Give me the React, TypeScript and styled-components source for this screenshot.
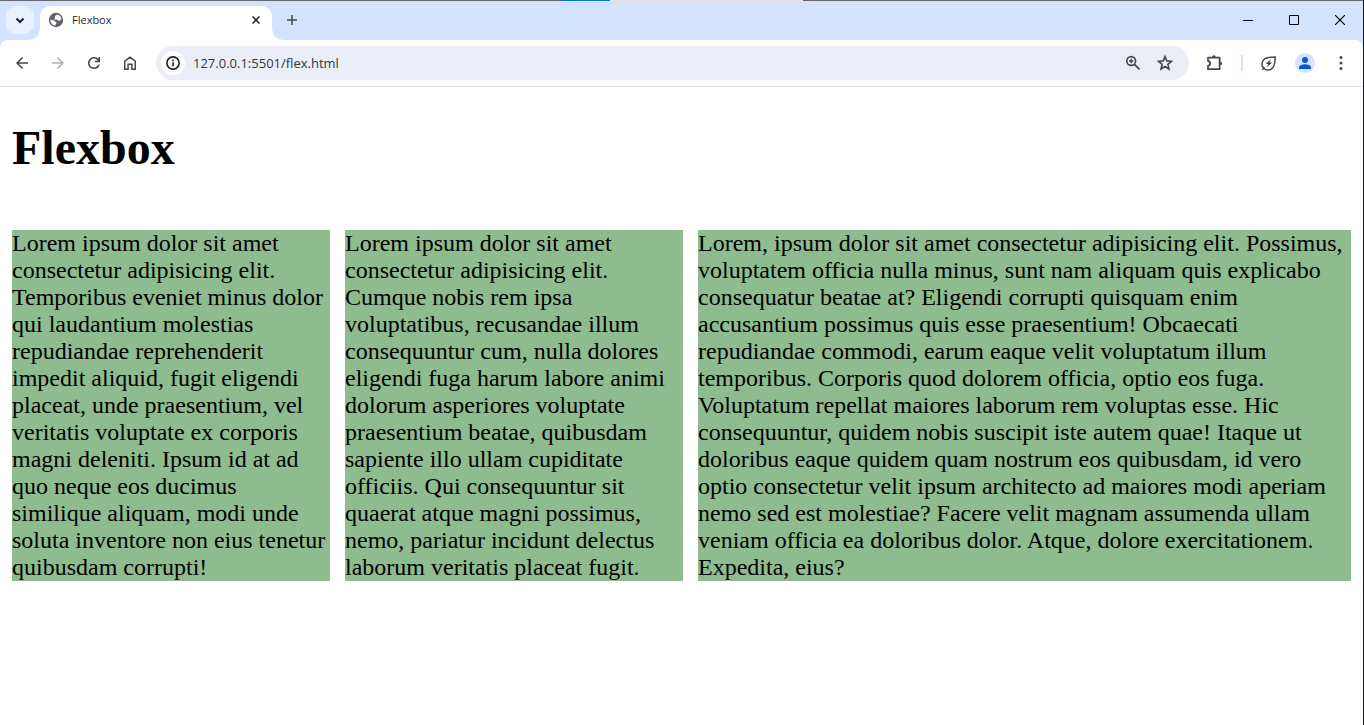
import React from "react";
import styled, { createGlobalStyle } from "styled-components";

const GlobalStyle = createGlobalStyle`
  *, *::before, *::after { box-sizing: border-box; }
  html, body { margin: 0; background: #fff; }
  button { font: inherit; border: 0; padding: 0; background: none; cursor: pointer; }
`;

const Frame = styled.div`
  min-height: 100vh;
  display: flex;
  flex-direction: column;
  border-right: 1px solid #1b1b1f;
`;

const DesktopEdge = styled.div`
  height: 1px;
  background: linear-gradient(
    to right,
    #63656f 0 561px,
    #0078d7 561px 610px,
    #e3e3e3 610px 803px,
    #63656f 803px
  );
`;

const TabStrip = styled.header`
  display: flex;
  align-items: flex-start;
  height: 39px;
  padding: 5px 0 0 6px;
  background: #d3e3fd;
`;

const TabSearch = styled.button`
  display: grid;
  place-items: center;
  width: 28px;
  height: 28px;
  border-radius: 10px;
  background: #e9f1fe;
`;

const Tab = styled.div`
  position: relative;
  display: flex;
  align-items: center;
  width: 232px;
  height: 34px;
  margin-left: 6px;
  padding: 0 8px;
  padding-bottom: 6px;
  border-radius: 10px 10px 0 0;
  background: #fff;

  &::before,
  &::after {
    content: "";
    position: absolute;
    bottom: 0;
    width: 10px;
    height: 10px;
  }
  &::before {
    right: 100%;
    background: radial-gradient(circle at 0 0, #d3e3fd 9px, #fff 10px);
  }
  &::after {
    left: 100%;
    background: radial-gradient(circle at 100% 0, #d3e3fd 9px, #fff 10px);
  }
`;

const TabTitle = styled.span`
  flex: 1;
  margin-left: 8px;
  font: 11px/16px "Open Sans", "Noto Sans", sans-serif;
  color: #1f1f1f;
`;

const SmallButton = styled.button`
  display: grid;
  place-items: center;
  width: 16px;
  height: 16px;
`;

const NewTab = styled.button`
  display: grid;
  place-items: center;
  width: 28px;
  height: 28px;
  margin-left: 6px;
`;

const WindowControls = styled.div`
  display: flex;
  margin-left: auto;
`;

const WindowButton = styled.button`
  display: grid;
  place-items: center;
  width: 46px;
  height: 28px;
`;

const ToolbarBack = styled.div`
  background: #d3e3fd;
`;

const Toolbar = styled.nav`
  display: flex;
  align-items: center;
  height: 47px;
  padding: 0 4px;
  border-bottom: 1px solid #dfe1e3;
  border-radius: 8px 8px 0 0;
  background: #fff;
`;

const ToolButton = styled.button`
  display: grid;
  place-items: center;
  width: 36px;
  height: 34px;
  color: #474747;

  &:disabled { color: #b0b0b0; }
`;

const AddressBar = styled.div`
  display: flex;
  flex: 1;
  align-items: center;
  height: 34px;
  margin: 0 8px;
  padding: 0 8px 0 5px;
  border-radius: 17px;
  background: #ebeef7;
`;

const SiteInfo = styled.button`
  display: grid;
  place-items: center;
  width: 24px;
  height: 24px;
  border-radius: 50%;
  background: #fff;
`;

const Address = styled.input`
  flex: 1;
  min-width: 0;
  height: 24px;
  margin-left: 8px;
  padding: 0;
  border: 0;
  outline: 0;
  background: transparent;
  font: 13px/24px "Open Sans", "Noto Sans", sans-serif;
  color: #35373a;
`;

const FieldButton = styled(ToolButton)`
  width: 32px;
`;

const Divider = styled.span`
  width: 2px;
  height: 16px;
  margin: 0 8px;
  background: #d3e3fd;
`;

const Avatar = styled.span`
  display: grid;
  place-items: center;
  width: 20px;
  height: 20px;
  border-radius: 50%;
  background: #d3e3fd;
`;

const Page = styled.main`
  flex: 1;
  padding: 34px 12px;
  font-family: "Liberation Serif", "Times New Roman", serif;
  color: #000;
`;

const Heading = styled.h1`
  margin: 0 0 55px;
  font-size: 48px;
  line-height: 54px;
`;

const Columns = styled.section`
  display: grid;
  grid-template-columns: 318fr 338fr 653fr;
  gap: 15px;
`;

const Column = styled.div`
  background: darkseagreen;
  font-size: 24px;
  line-height: 27px;
`;

type IconProps = { size: number; box?: number; children: React.ReactNode };

const Svg = ({ size, box = size, children }: IconProps) => (
  <svg width={size} height={size} viewBox={`0 0 ${box} ${box}`} fill="none" aria-hidden="true">
    {children}
  </svg>
);

const texts = [
  "Lorem ipsum dolor sit amet consectetur adipisicing elit. Temporibus eveniet minus dolor qui laudantium molestias repudiandae reprehenderit impedit aliquid, fugit eligendi placeat, unde praesentium, vel veritatis voluptate ex corporis magni deleniti. Ipsum id at ad quo neque eos ducimus similique aliquam, modi unde soluta inventore non eius tenetur quibusdam corrupti!",
  "Lorem ipsum dolor sit amet consectetur adipisicing elit. Cumque nobis rem ipsa voluptatibus, recusandae illum consequuntur cum, nulla dolores eligendi fuga harum labore animi dolorum asperiores voluptate praesentium beatae, quibusdam sapiente illo ullam cupiditate officiis. Qui consequuntur sit quaerat atque magni possimus, nemo, pariatur incidunt delectus laborum veritatis placeat fugit.",
  "Lorem, ipsum dolor sit amet consectetur adipisicing elit. Possimus, voluptatem officia nulla minus, sunt nam aliquam quis explicabo consequatur beatae at? Eligendi corrupti quisquam enim accusantium possimus quis esse praesentium! Obcaecati repudiandae commodi, earum eaque velit voluptatum illum temporibus. Corporis quod dolorem officia, optio eos fuga. Voluptatum repellat maiores laborum rem voluptas esse. Hic consequuntur, quidem nobis suscipit iste autem quae! Itaque ut doloribus eaque quidem quam nostrum eos quibusdam, id vero optio consectetur velit ipsum architecto ad maiores modi aperiam nemo sed est molestiae? Facere velit magnam assumenda ullam veniam officia ea doloribus dolor. Atque, dolore exercitationem. Expedita, eius?",
];

export default function App() {
  return (
    <Frame>
      <GlobalStyle />
      <DesktopEdge />
      <TabStrip>
        <TabSearch aria-label="Search tabs">
          <Svg size={10}>
            <path d="M1.5 3.5 5 7l3.5-3.5" stroke="#1f1f1f" strokeWidth="2" />
          </Svg>
        </TabSearch>
        <Tab>
          <Svg size={16}>
            <circle cx="8" cy="8" r="7.2" fill="#5f6368" />
            <path
              d="M2.3 7.6 5 8.2c1.2.2 1.8.6 2.2 1.3.4.8 1.3.4 1.3 1.3 0 1-.9 1-.9 2v.8C4.6 13.6 2.3 11 2.3 7.6ZM8.8 2.5c-.2.8-1.3.8-1.8 1.4-.5.8.2 1.3 0 2-.1.7-.9.9-.6 1.5.3.5 1.4.1 2.300.2.9.1.9 1 1.700 1.200 1.200.2 2-.9 3.200-1.300C13.500 4.900 11.500 2.900 8.800 2.500Z"
              fill="#fff"
            />
          </Svg>
          <TabTitle>Flexbox</TabTitle>
          <SmallButton aria-label="Close tab">
            <Svg size={10}>
              <path d="m1.5 1.5 7 7m0-7-7 7" stroke="#1f1f1f" strokeWidth="1.5" />
            </Svg>
          </SmallButton>
        </Tab>
        <NewTab aria-label="New tab">
          <Svg size={12}>
            <path d="M6 1v10M1 6h10" stroke="#474747" strokeWidth="1.5" />
          </Svg>
        </NewTab>
        <WindowControls>
          <WindowButton aria-label="Minimize">
            <Svg size={10}>
              <path d="M0 5.5h10" stroke="#000" />
            </Svg>
          </WindowButton>
          <WindowButton aria-label="Maximize">
            <Svg size={10}>
              <path d="M.5.5h9v9h-9z" stroke="#000" />
            </Svg>
          </WindowButton>
          <WindowButton aria-label="Close">
            <Svg size={10}>
              <path d="m0 0 10 10M10 0 0 10" stroke="#000" strokeWidth="1.1" />
            </Svg>
          </WindowButton>
        </WindowControls>
      </TabStrip>
      <ToolbarBack>
        <Toolbar aria-label="Browser toolbar">
          <ToolButton aria-label="Back">
            <Svg size={18} box={24}>
              <path d="M20 11H7.83l5.590-5.590L12 4l-8 8 8 8 1.410-1.410L7.830 13H20v-2z" fill="currentColor" />
            </Svg>
          </ToolButton>
          <ToolButton aria-label="Forward" disabled>
            <Svg size={18} box={24}>
              <path d="m12 4-1.410 1.410L16.170 11H4v2h12.170l-5.580 5.590L12 20l8-8z" fill="currentColor" />
            </Svg>
          </ToolButton>
          <ToolButton aria-label="Reload">
            <Svg size={18} box={24}>
              <path
                d="M12 20a8 8 0 1 1 6-13.250V4h2v7h-7V9h4.200A6 6 0 1 0 17.650 14h2.100A8 8 0 0 1 12 20z"
                fill="currentColor"
              />
            </Svg>
          </ToolButton>
          <ToolButton aria-label="Home">
            <Svg size={18}>
              <path
                d="M3.750 15.250V7.200L9 3.200l5.250 4v8.050h-3.300V10.200h-3.900v5.050z"
                stroke="currentColor"
                strokeWidth="1.500"
              />
            </Svg>
          </ToolButton>
          <AddressBar>
            <SiteInfo aria-label="View site information">
              <Svg size={16}>
                <circle cx="8" cy="8" r="6.1" stroke="#1f1f1f" strokeWidth="1.6" />
                <path d="M8 7.200v4M8 4.600v1.600" stroke="#1f1f1f" strokeWidth="1.6" />
              </Svg>
            </SiteInfo>
            <Address aria-label="Address" defaultValue="127.0.0.1:5501/flex.html" />
            <FieldButton aria-label="Zoom">
              <Svg size={16}>
                <circle cx="6.2" cy="6" r="4.4" stroke="currentColor" strokeWidth="1.6" />
                <path d="m9.500 9.300 5 5" stroke="currentColor" strokeWidth="1.8" />
                <path d="M6.200 3.800v4.400M4 6h4.400" stroke="currentColor" strokeWidth="1.4" />
              </Svg>
            </FieldButton>
            <FieldButton aria-label="Bookmark this page">
              <Svg size={18}>
                <path
                  d="m9 2.600 1.800 4.300 4.700.4-3.600 3.100 1.100 4.600-4-2.500L5 15l1.100-4.600-3.600-3.100 4.700-.4z"
                  stroke="currentColor"
                  strokeWidth="1.600"
                />
              </Svg>
            </FieldButton>
          </AddressBar>
          <ToolButton aria-label="Extensions">
            <Svg size={18}>
              <path
                d="M2 3.600h11.600v11.600H2v-3.500c1.500-.2 2.200-1 2.200-2.300S3.500 7.300 2 7.100z"
                stroke="currentColor"
                strokeWidth="1.700"
                strokeLinejoin="round"
              />
              <path d="M6 3.200a1.900 1.900 0 0 1 3.800 0zM14.200 7.500a1.900 1.900 0 0 1 0 3.800z" fill="currentColor" />
            </Svg>
          </ToolButton>
          <Divider />
          <ToolButton aria-label="Energy saver">
            <Svg size={18}>
              <path
                d="M3.700 14.300a6 6 0 0 1 0-8.500C6 3.500 10 3 15.200 2.900 15.200 8 14.500 12 12.200 14.300a6 6 0 0 1-8.500 0zM4.600 13.400l-2.300 2.400"
                stroke="currentColor"
                strokeWidth="1.500"
              />
              <path d="m10.900 5.300-5 4.300 2.300.6-1.400 3 5.200-4.400-2.500-.6z" fill="currentColor" />
            </Svg>
          </ToolButton>
          <ToolButton aria-label="Profile">
            <Avatar>
              <Svg size={20}>
                <circle cx="10" cy="7" r="3" fill="#0b57d0" />
                <path d="M4 16v-1.500C4 12.200 7.500 11.300 10 11.300s6 .9 6 3.200V16z" fill="#0b57d0" />
              </Svg>
            </Avatar>
          </ToolButton>
          <ToolButton aria-label="Menu">
            <Svg size={18}>
              <circle cx="9" cy="3.500" r="1.500" fill="currentColor" />
              <circle cx="9" cy="9" r="1.500" fill="currentColor" />
              <circle cx="9" cy="14.500" r="1.500" fill="currentColor" />
            </Svg>
          </ToolButton>
        </Toolbar>
      </ToolbarBack>
      <Page>
        <Heading>Flexbox</Heading>
        <Columns>
          {texts.map((text) => (
            <Column key={text}>{text}</Column>
          ))}
        </Columns>
      </Page>
    </Frame>
  );
}
